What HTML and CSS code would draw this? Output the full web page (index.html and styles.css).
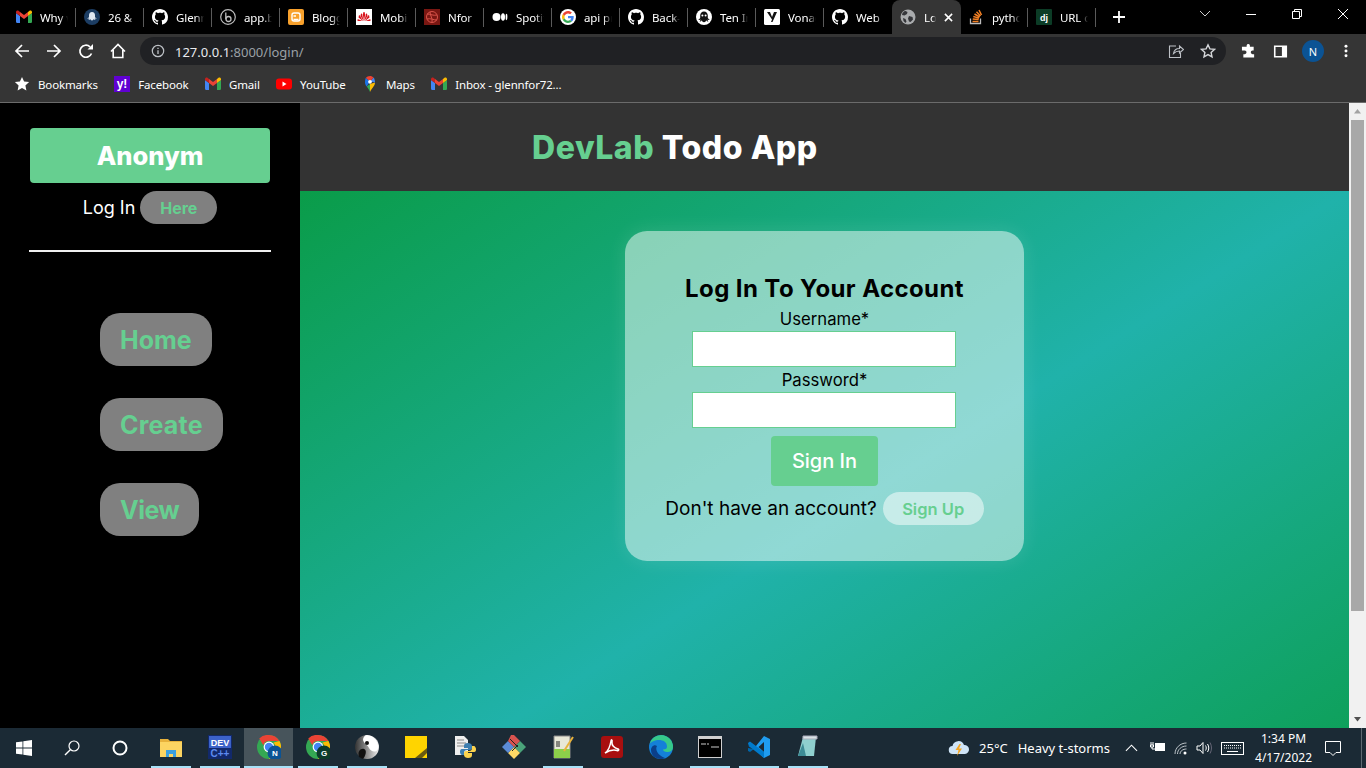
FILE: index.html
```html
<!DOCTYPE html>
<html lang="en">
<head>
<meta charset="utf-8">
<title>Log In</title>
<link rel="stylesheet" href="styles.css">
</head>
<body>
<svg class="defs" width="0" height="0" aria-hidden="true">
  <symbol id="gh" viewBox="0 0 16 16"><path fill="#fff" d="M8 0C3.58 0 0 3.58 0 8c0 3.54 2.29 6.53 5.47 7.59.4.07.55-.17.55-.38 0-.19-.01-.82-.01-1.49-2.01.37-2.53-.49-2.69-.94-.09-.23-.48-.94-.82-1.13-.28-.15-.68-.52-.01-.53.63-.01 1.08.58 1.23.82.72 1.21 1.87.87 2.33.66.07-.52.28-.87.51-1.07-1.78-.2-3.64-.89-3.64-3.95 0-.87.31-1.59.82-2.15-.08-.2-.36-1.02.08-2.12 0 0 .67-.21 2.2.82.64-.18 1.32-.27 2-.27.68 0 1.36.09 2 .27 1.53-1.04 2.2-.82 2.2-.82.44 1.1.16 1.92.08 2.12.51.56.82 1.27.82 2.15 0 3.07-1.87 3.75-3.65 3.95.29.25.54.73.54 1.48 0 1.07-.01 1.93-.01 2.2 0 .21.15.46.55.38A8.013 8.013 0 0016 8c0-4.42-3.58-8-8-8z"/></symbol>
  <symbol id="gmail" viewBox="0 0 16 16"><path fill="#4285f4" d="M1 14h3V7L0 4v8.500C0 13.300.6 14 1 14z"/><path fill="#34a853" d="M12 14h3c.6 0 1-.7 1-1.500V4l-4 3z"/><path fill="#fbbc04" d="M12 3v4l4-3V3c0-1.400-1.500-2-2.500-1.300z"/><path fill="#ea4335" d="M4 7V3l4 3 4-3v4L8 10z"/><path fill="#c5221f" d="M0 3v1l4 3V3L2.500 1.700C1.500 1 0 1.600 0 3z"/></symbol>
  <symbol id="chrome" viewBox="0 0 32 32"><circle cx="16" cy="16" r="16" fill="#34a853"/><path fill="#ea4335" d="M16 0a16 16 0 0 1 13.900 8H16a8 8 0 0 0-7.600 5.500L3 4.800A16 16 0 0 1 16 0z"/><path fill="#fbbc04" d="M29.900 8A16 16 0 0 1 16 32l6-10.500A8 8 0 0 0 22 10z"/><circle cx="16" cy="16" r="7.200" fill="#fff"/><circle cx="16" cy="16" r="5.600" fill="#4285f4"/></symbol>
  <symbol id="ghost" viewBox="0 0 16 16"><circle cx="8" cy="8" r="8" fill="#fff"/><path fill="#111" d="M8 2.500c-2.400 0-3.800 1.900-3.800 4V9c-.6.800-1.200 1.400-2 1.600.8.500 1.700.3 2.300-.2-.1 1-.5 1.700-1 2.200 1 .1 1.900-.4 2.300-1.400.2.900.7 1.700 2.200 2 1.500-.3 2-1.100 2.200-2 .4 1 1.300 1.500 2.300 1.400-.5-.5-.9-1.200-1-2.200.6.500 1.500.7 2.300.2-.8-.2-1.400-.8-2-1.600V6.500c0-2.100-1.400-4-3.800-4z"/><circle cx="6.400" cy="6.500" r="1" fill="#fff"/><circle cx="9.600" cy="6.500" r="1" fill="#fff"/></symbol>
</svg>

<div class="window">
  <header class="tabstrip">
    <div class="tab"><svg class="fav" viewBox="0 0 16 16"><use href="#gmail"/></svg><span class="tab-text">Why w</span></div>
    <div class="tab"><svg class="fav" viewBox="0 0 16 16"><circle cx="8" cy="8" r="8" fill="#1c3d63"/><path fill="#dfe8f2" d="M8 3c-2 0-3 1.500-3 3.200V8c-.5.700-1 1.200-1.800 1.400.7.400 1.400.3 2-.1 0 .8-.4 1.400-.8 1.800.8.100 1.500-.3 1.900-1.100.2.700.6 1.300 1.700 1.600 1.100-.3 1.500-.9 1.700-1.600.4.800 1.100 1.200 1.900 1.100-.4-.4-.8-1-.8-1.800.6.400 1.300.5 2 .1C12 9.200 11.500 8.700 11 8V6.200C11 4.500 10 3 8 3z"/></svg><span class="tab-text">26 &amp;</span></div>
    <div class="tab"><svg class="fav"><use href="#gh"/></svg><span class="tab-text">Glenn</span></div>
    <div class="tab"><svg class="fav" viewBox="0 0 16 16"><circle cx="8" cy="8" r="7.300" fill="none" stroke="#bdbdbd" stroke-width="1.200"/><path fill="none" stroke="#bdbdbd" stroke-width="1.300" d="M5.800 3.500v6.800"/><circle cx="8.500" cy="10" r="2.500" fill="none" stroke="#bdbdbd" stroke-width="1.300"/></svg><span class="tab-text">app.b</span></div>
    <div class="tab"><svg class="fav" viewBox="0 0 16 16"><rect width="16" height="16" rx="2" fill="#f8a12c"/><path fill="none" stroke="#fff" stroke-width="1.400" d="M5.500 10.500h5M5.500 7h2.500"/><rect x="4" y="4" width="8" height="8" rx="2" fill="none" stroke="#fff" stroke-width="1.400"/></svg><span class="tab-text">Blogg</span></div>
    <div class="tab"><svg class="fav" viewBox="0 0 16 16"><rect width="16" height="16" fill="#fff"/><path fill="#d8121b" d="M8 12 6.800 5.500 7.500 3 8 3zM8 12 9.200 5.500 8.500 3 8 3zM7.600 12 4.500 7l.5-2.500 1 .2zM8.400 12l3.100-5-.5-2.500-1 .2zM7 12 2.500 8.500 3 6l.8.500zM9 12l4.500-3.500L13 6l-.8.500zM6.500 12H1.500l.2-2zM9.500 12h5l-.2-2z"/></svg><span class="tab-text">Mobi</span></div>
    <div class="tab"><svg class="fav" viewBox="0 0 16 16"><rect width="16" height="16" fill="#7a1712"/><circle cx="8" cy="8" r="5.500" fill="none" stroke="#d9534a" stroke-width="1"/><path fill="none" stroke="#d9534a" d="M3 5c4 0 6 2 10 1M3 10c4-1 6 1 10 1M6 3c0 4 3 6 2 10"/></svg><span class="tab-text">Nfor</span></div>
    <div class="tab"><svg class="fav" viewBox="0 0 16 16"><circle cx="4.500" cy="8" r="4" fill="#fff"/><ellipse cx="11" cy="8" rx="2" ry="3.800" fill="#fff"/><ellipse cx="14.500" cy="8" rx=".9" ry="3.300" fill="#fff"/></svg><span class="tab-text">Spotif</span></div>
    <div class="tab"><svg class="fav" viewBox="0 0 16 16"><circle cx="8" cy="8" r="8" fill="#fff"/><path fill="#4285f4" d="M13.700 8.200c0-.4 0-.8-.1-1.200H8v2.300h3.200c-.1.700-.6 1.400-1.200 1.800l1.900 1.500c1.100-1 1.800-2.600 1.800-4.400z"/><path fill="#34a853" d="M8 14c1.600 0 3-.5 3.900-1.400L10 11.100c-.5.400-1.200.6-2 .6-1.500 0-2.800-1-3.300-2.400l-2 1.500C3.700 12.700 5.700 14 8 14z"/><path fill="#fbbc04" d="M4.700 9.300C4.400 8.500 4.400 7.500 4.700 6.700l-2-1.500c-.9 1.700-.9 3.900 0 5.600z"/><path fill="#ea4335" d="M8 4.400c.9 0 1.600.3 2.200.9l1.700-1.700C10.900 2.600 9.500 2 8 2 5.700 2 3.700 3.300 2.700 5.200l2 1.500C5.200 5.400 6.500 4.400 8 4.400z"/></svg><span class="tab-text">api pr</span></div>
    <div class="tab"><svg class="fav"><use href="#gh"/></svg><span class="tab-text">Back-</span></div>
    <div class="tab"><svg class="fav"><use href="#ghost"/></svg><span class="tab-text">Ten Ir</span></div>
    <div class="tab"><svg class="fav" viewBox="0 0 16 16"><rect width="16" height="16" rx="1.500" fill="#fff"/><path fill="#111" d="M3 3h3l2 5 2-5h3L8.500 13H7l1-2.500z"/></svg><span class="tab-text">Vonag</span></div>
    <div class="tab tab-before-active"><svg class="fav"><use href="#gh"/></svg><span class="tab-text">Web</span></div>
    <div class="tab tab-active"><svg class="fav" viewBox="0 0 16 16"><circle cx="8" cy="8" r="7.500" fill="#a9abad"/><path fill="#35363a" d="M5 1.800 7.500 3 7 5 4.500 6.500 2 6l.5-2zM9 7l3.500 1 .5 2.500L10.500 13 9 12.500 8 9.500zM3 9l2.500 1 1 2.500-1 1.500L3.500 12z"/></svg><span class="tab-text tab-text-short">Lo</span><svg class="tab-close" viewBox="0 0 10 10"><path fill="none" stroke="#fff" stroke-width="1.700" d="m1 1 8 8M9 1 1 9"/></svg></div>
    <div class="tab"><svg class="fav" viewBox="0 0 16 16"><path fill="none" stroke="#bcbbbb" stroke-width="1.300" d="M2.500 9.500v5h10v-5"/><path fill="none" stroke="#f48024" stroke-width="1.500" d="M4.500 12.500h6M4.700 10l6 .6M5.300 7.500l5.800 1.600M6.500 5l5.200 3M8.500 2.700l4 4.200M11 1l2.500 5"/></svg><span class="tab-text">pytho</span></div>
    <div class="tab"><svg class="fav" viewBox="0 0 16 16"><rect width="16" height="16" rx="1" fill="#0c3c26"/><text x="8" y="12" class="dj">dj</text></svg><span class="tab-text">URL c</span></div>
    <svg class="new-tab" viewBox="0 0 12 12"><path stroke="#fff" stroke-width="1.800" d="M6 0v12M0 6h12"/></svg>
    <div class="win-controls">
      <svg class="win-ic" viewBox="0 0 46 34"><path fill="none" stroke="#ccc" d="m18 11 5 5 5-5"/></svg>
      <svg class="win-ic" viewBox="0 0 46 34"><path stroke="#fff" d="M18 14.500h10"/></svg>
      <svg class="win-ic" viewBox="0 0 46 34"><path fill="none" stroke="#fff" d="M18.500 11.500h7v7h-7zM20.500 11.500v-2h7v7h-2"/></svg>
      <svg class="win-ic" viewBox="0 0 46 34"><path fill="none" stroke="#fff" d="m18 9 10 10M28 9 18 19"/></svg>
    </div>
  </header>

  <nav class="toolbar">
    <svg class="tool" viewBox="0 0 16 16"><path fill="none" stroke="#fff" stroke-width="1.700" d="M15 8H2M8 2 2 8l6 6"/></svg>
    <svg class="tool" viewBox="0 0 16 16"><path fill="none" stroke="#fff" stroke-width="1.700" d="M1 8h13M8 2l6 6-6 6"/></svg>
    <svg class="tool" viewBox="0 0 16 16"><path fill="none" stroke="#fff" stroke-width="1.700" d="M13.500 10.500A6 6 0 1 1 12 3.800"/><path fill="#fff" d="M15 1v5.500H9.500z"/></svg>
    <svg class="tool" viewBox="0 0 16 16"><path fill="none" stroke="#fff" stroke-width="1.600" d="M1 8.500 8 1.500l7 7M3.200 7v7.500h9.600V7"/></svg>
    <div class="omnibox">
      <svg class="info" viewBox="0 0 16 16"><circle cx="8" cy="8" r="6.500" fill="none" stroke="#bdc1c6" stroke-width="1.400"/><path stroke="#bdc1c6" stroke-width="1.500" d="M8 7v4.500M8 4.300v1.500"/></svg>
      <span class="url"><span class="url-host">127.0.0.1</span>:8000/login/</span>
      <svg class="omni-ic share" viewBox="0 0 16 16"><path fill="none" stroke="#bdc1c6" stroke-width="1.100" d="M8 3H1.500v11.500h11V10M5.500 10.500c.5-3 3-5 6-5V3L15.500 6.500l-4 3.500V8c-2.500 0-4.500 1-6 2.500z"/></svg>
      <svg class="omni-ic" viewBox="0 0 16 16"><path fill="none" stroke="#d5d7da" stroke-width="1.400" d="m8 1.800 1.900 4.100 4.500.5-3.300 3 .9 4.400L8 11.600l-4 2.200.9-4.400-3.300-3 4.500-.5z"/></svg>
    </div>
    <svg class="tool-r puzzle" viewBox="0 0 16 16"><path fill="#fff" d="M6 1.500a1.800 1.800 0 0 1 3.500 0V3h4v4h-1.200a1.900 1.900 0 0 0 0 3.800H14V14.500H2.500v-3.700H4a1.900 1.900 0 0 0 0-3.800H1V3h5z"/></svg>
    <svg class="tool-r panel" viewBox="0 0 16 16"><path fill="#fff" d="M1 1.500h14v13H1zM2.700 3.200v9.600H9.500V3.200z"/></svg>
    <span class="avatar">N</span>
    <svg class="tool-r dots" viewBox="0 0 16 16"><circle cx="8" cy="2.500" r="1.700" fill="#fff"/><circle cx="8" cy="8" r="1.700" fill="#fff"/><circle cx="8" cy="13.500" r="1.700" fill="#fff"/></svg>
  </nav>

  <div class="bookmarks">
    <span class="bm"><svg class="bm-ic" viewBox="0 0 16 16"><path fill="#fff" d="m8 1 2.100 4.600 5 .5-3.700 3.400 1 4.900L8 12l-4.400 2.400 1-4.900L.9 6.100l5-.5z"/></svg>Bookmarks</span>
    <span class="bm"><svg class="bm-ic" viewBox="0 0 16 16"><rect width="16" height="16" fill="#6001d2"/><text x="8" y="12" class="yh">y!</text></svg>Facebook</span>
    <span class="bm"><svg class="bm-ic"><use href="#gmail"/></svg>Gmail</span>
    <span class="bm"><svg class="bm-ic" viewBox="0 0 16 16"><rect y="2.500" width="16" height="11" rx="3" fill="#f00"/><path fill="#fff" d="m6.500 5.500 4 2.500-4 2.500z"/></svg>YouTube</span>
    <span class="bm"><svg class="bm-ic" viewBox="0 0 16 16"><path fill="#34a853" d="M8 16c-1-2.500-2-3.800-3.300-5.500L8 8z"/><path fill="#fbbc04" d="M8 16c1-2.500 2.500-4 3.500-5.500C12.500 9 13 7.800 13 6.500L8 8z"/><path fill="#4285f4" d="M11.500 1.500 8 5.500 13 6.500c0-2-.5-3.700-1.500-5z"/><path fill="#ea4335" d="M8 0C6.200 0 4.700.8 3.800 2L8 5.500l3.500-4C10.700.6 9.400 0 8 0z"/><path fill="#1a73e8" d="M3.800 2C3.300 2.900 3 5 3 6.500c0 1.500.8 3 1.700 4L8 5.500z"/><circle cx="8" cy="5.800" r="1.900" fill="#fff"/></svg>Maps</span>
    <span class="bm"><svg class="bm-ic"><use href="#gmail"/></svg>Inbox - glennfor72...</span>
  </div>

  <div class="viewport">
    <aside class="sidebar">
      <div class="user-box">Anonym</div>
      <div class="login-row">Log In <a class="here">Here</a></div>
      <hr class="rule">
      <ul class="nav">
        <li class="nav-item">Home</li>
        <li class="nav-item nav-create">Create</li>
        <li class="nav-item nav-view">View</li>
      </ul>
    </aside>
    <div class="page">
      <div class="page-head"><h1 class="brand"><span class="brand-green">DevLab</span> Todo App</h1></div>
      <main class="stage">
        <form class="card">
          <h2 class="card-title">Log In To Your Account</h2>
          <label class="field-label">Username*</label>
          <input class="field" type="text">
          <label class="field-label">Password*</label>
          <input class="field" type="password">
          <button class="signin" type="button">Sign In</button>
          <div class="signup-row">Don't have an account? <a class="signup">Sign Up</a></div>
        </form>
      </main>
    </div>
    <div class="scrollbar">
      <svg class="sb-arrow" viewBox="0 0 17 17"><path fill="#a3a3a3" d="m8.500 6 3.500 4.500H5z"/></svg>
      <div class="sb-track"><div class="sb-thumb"></div></div>
      <svg class="sb-arrow" viewBox="0 0 17 17"><path fill="#505050" d="M8.500 10.500 5 6h7z"/></svg>
    </div>
  </div>

  <footer class="taskbar">
    <div class="tb-left">
      <svg class="tb-sys" viewBox="0 0 16 16"><path fill="#fff" d="M0 2.300 6.500 1.400v6.200H0zM7.300 1.300 16 0v7.600H7.300zM0 8.400h6.500v6.200L0 13.700zM7.300 8.400H16V16l-8.700-1.300z"/></svg>
      <svg class="tb-sys" viewBox="0 0 16 16"><circle cx="10" cy="6" r="5" fill="none" stroke="#fff" stroke-width="1.200"/><path stroke="#fff" stroke-width="1.400" d="M6.300 9.700 1 15"/></svg>
      <svg class="tb-sys" viewBox="0 0 16 16"><circle cx="8" cy="8" r="6.500" fill="none" stroke="#fff" stroke-width="2"/></svg>
    </div>
    <div class="tb-apps">
      <span class="app open"><svg class="app-ic" viewBox="0 0 24 24"><path fill="#e8b23c" d="M1 4h8l2 2h12v4H1z"/><path fill="#fcd462" d="M1 7h22v15H1z"/><path fill="#3b9fe0" d="M7 15h10v7h-3v-3h-4v3H7z"/></svg></span>
      <span class="app open"><svg class="app-ic" viewBox="0 0 24 24"><rect width="24" height="24" fill="#12296b"/><rect x="1" y="1" width="22" height="12" fill="#3c62c8"/><text x="12" y="10.500" class="dev">DEV</text><text x="12" y="22" class="cpp">C++</text></svg></span>
      <span class="app open active"><svg class="app-ic" viewBox="0 0 24 24"><use href="#chrome"/><circle cx="18" cy="18" r="7.500" fill="#0b5394"/><text x="18" y="21" class="badge">N</text></svg></span>
      <span class="app open"><svg class="app-ic" viewBox="0 0 24 24"><use href="#chrome"/><circle cx="18" cy="18" r="7.500" fill="#0d3b2a"/><text x="18" y="21" class="badge">G</text></svg></span>
      <span class="app open"><svg class="app-ic" viewBox="0 0 24 24"><defs><linearGradient id="yy" x1="0" y1="0" x2="1" y2="0"><stop offset="0" stop-color="#333"/><stop offset="1" stop-color="#eee"/></linearGradient></defs><circle cx="12" cy="12" r="12" fill="url(#yy)"/><path fill="#fff" d="M12 0a12 12 0 0 1 11 14c-2 4-7 3-9-1-1-3-5-4-6-8 0-3 2-5 4-5z"/><path fill="#111" d="M4 22c-2-6 2-9 5-8 3 1 2 6-1 10z"/><circle cx="12" cy="8" r="2" fill="#111"/></svg></span>
      <span class="app"><svg class="app-ic" viewBox="0 0 24 24"><path fill="#ffd400" d="M1 1h22v22H1z"/><path fill="#6a5a10" d="M23 13v5l-5 5h-7z"/></svg></span>
      <span class="app"><svg class="app-ic" viewBox="0 0 24 24"><path fill="#eee" d="M2 1h9l4 4v15H2z"/><path stroke="#888" d="M4 5h7M4 8h9M4 11h9"/><path fill="#3d7eb0" d="M15 8c-3 0-4 1-4 3v2h4v1H9c-2 0-2 2-2 3s1 3 2 3h2v-2c0-2 1-3 3-3h3c1 0 2-1 2-2v-2c0-2-2-3-4-3z"/><path fill="#fcd34d" d="M15 23c3 0 4-1 4-3v-2h-4v-1h6c2 0 2-2 2-3s-1-3-2-3h-2v2c0 2-1 3-3 3h-3c-1 0-2 1-2 2v2c0 2 2 3 4 3z"/></svg></span>
      <span class="app"><svg class="app-ic" viewBox="0 0 24 24"><path fill="#4aa37a" d="M12 12 18 6l6 6-6 6z"/><path fill="#ffd866" d="m12 12 6 6-6 6-6-6z"/><path fill="#5b8bd6" d="m12 12-6 6-6-6 6-6z"/><path fill="#d9534f" d="m12 12-6-6 3-6h3l6 6z"/><path stroke="#222" d="M8 4l8 8M10 16l6-6"/></svg></span>
      <span class="app open"><svg class="app-ic" viewBox="0 0 24 24"><path fill="#e8e8d8" stroke="#888" d="M3 1h16v22H3z"/><path fill="#8ccf4a" d="M3 14h16v9H3z"/><path stroke="#222" d="M6 6v6M8 6v6"/><path stroke="#e8b23c" stroke-width="2" d="M13 16 22 2"/></svg></span>
      <span class="app"><svg class="app-ic" viewBox="0 0 24 24"><rect x="1" y="1" width="22" height="22" rx="3" fill="#a80f0f"/><path fill="none" stroke="#fff" stroke-width="1.500" d="M5 18c3-2 5-6 6-12 .3-2 1.500-1 1 1-.5 3 2 6 6 7 1.500.500.500 2-1 1.500-4-1-8 0-12 2.500z"/></svg></span>
      <span class="app"><svg class="app-ic" viewBox="0 0 24 24"><circle cx="12" cy="12" r="12" fill="#1480d8"/><path fill="#36c98a" d="M12 0a12 12 0 0 1 12 12c0 4-3 5-6 5-2 0-4-1-4-2.500 3 0 4-1 4-3C18 7 14 5 10 5 6 5 2 7 .500 9A12 12 0 0 1 12 0z"/><path fill="#0b3f8a" d="M8 11c-2 3 0 9 8 12-1 .5-2.500 1-4 1-6 0-10-4-10-9 0-3 3-6 6-4z"/></svg></span>
      <span class="app open"><svg class="app-ic" viewBox="0 0 24 24"><rect y="1" width="24" height="22" fill="#d0d0d0"/><rect x="1" y="4" width="22" height="18" fill="#000"/><path stroke="#ccc" d="M3 9h5M9 9h2M13 12h8"/></svg></span>
      <span class="app open"><svg class="app-ic" viewBox="0 0 24 24"><path fill="#0065a9" d="M1 8.500 3 7l5 4-1 2-5-1z M7 14 3 17 1 16v-3z"/><path fill="#1f9cf0" d="M17 1l6 3v16l-6 3L7 13.500zM17 7l-5.500 5 5.500 5z"/><path fill="#007acc" d="M1 8 3 6.500 17 17v6L3 12z"/></svg></span>
      <span class="app open"><svg class="app-ic" viewBox="0 0 24 24"><path fill="#8fd0cf" d="M7 2h13l-2 19H2z"/><path fill="#3d8c96" d="M2 21 7 8l3 13z"/><path fill="#d8e3e6" stroke="#aab" d="M7 1h14v3H7z"/></svg></span>
    </div>
    <div class="tray">
      <svg class="weather" viewBox="0 0 22 18"><path fill="#cfe4f7" d="M5 15a4 4 0 0 1-.5-8A6 6 0 0 1 16 6a4.500 4.500 0 0 1 1 9z"/><path fill="#f5a623" d="M11.500 5 7.500 11h3l-1.500 6 5-7.500h-3l2-4.500z"/></svg>
      <span class="temp">25°C</span>
      <span class="cond">Heavy t-storms</span>
      <svg class="chev" viewBox="0 0 14 8"><path fill="none" stroke="#fff" stroke-width="1.200" d="m1 7 6-6 6 6"/></svg>
      <svg class="tray-ic batt" viewBox="0 0 16 10"><path fill="#fff" d="M5 1h10v8H5z"/><path fill="none" stroke="#fff" d="M.5 3v2h3V3zM2 5v2h3M1 3V0M3 3V0"/></svg>
      <svg class="tray-ic wifi" viewBox="0 0 14 14"><path fill="none" stroke="#bcc3c8" d="M1 13C1 7 6 2 12.500 2M3.500 13c0-4.500 4-8 9-8M6 13c0-3 3-5 6.500-5"/><circle cx="11" cy="12" r="1.500" fill="#fff"/></svg>
      <svg class="tray-ic vol" viewBox="0 0 16 14"><path fill="none" stroke="#fff" d="M1 5h3l3-3.500v11L4 9H1zM9.500 4.500c1 1.500 1 3.500 0 5M11.500 3c1.700 2.500 1.700 5.500 0 8"/><path fill="none" stroke="#667" d="M14 1.500c2 3.500 2 7.500 0 11"/></svg>
      <svg class="kbd" viewBox="0 0 23 13"><rect x=".5" y=".5" width="22" height="12" fill="none" stroke="#fff"/><path stroke="#fff" stroke-dasharray="1 1" d="M3 3.500h17M3 6h17"/><path stroke="#fff" d="M6 9.500h11"/></svg>
      <span class="clock"><span>1:34 PM</span><span>4/17/2022</span></span>
      <svg class="notif" viewBox="0 0 16 16"><path fill="none" stroke="#fff" d="M.5 1.500h15v11H11l-3 3-3-3H.5z"/></svg>
      <span class="show-desktop"></span>
    </div>
  </footer>
</div>
</body>
</html>
```

FILE: styles.css
```css
* { box-sizing: border-box; }
html, body { margin: 0; height: 100%; overflow: hidden; }
body { font-family: "Noto Sans", "Open Sans", sans-serif; background: #000; }
.defs { position: absolute; }
.window { display: flex; flex-direction: column; width: 1366px; height: 768px; }

/* tab strip */
.tabstrip { display: flex; align-items: stretch; height: 34px; background: #000; padding-left: 8px; flex: none; }
.tab { position: relative; display: flex; align-items: center; width: 68px; padding-left: 8px; color: #fff; font-size: 11.5px; letter-spacing: -.1px; }
.tab::after { content: ""; position: absolute; right: 0; top: 8px; height: 19px; width: 1px; background: #5a5a5a; }
.tab-before-active::after, .tab-active::after { display: none; }
.fav { width: 16px; height: 16px; flex: none; }
.tab-text { width: 28px; margin-left: 8px; overflow: hidden; white-space: nowrap; -webkit-mask-image: linear-gradient(to right, #000 70%, transparent); mask-image: linear-gradient(to right, #000 70%, transparent); }
.tab-active { background: #353535; border-radius: 8px 8px 0 0; width: 69px; margin-right: -1px; }
.tab-text-short { width: 12px; }
.tab-close { width: 9px; height: 9px; margin-left: 8px; flex: none; }
.new-tab { width: 12px; height: 12px; margin: 11px 0 0 17px; flex: none; }
.win-controls { margin-left: auto; display: flex; }
.win-ic { width: 46px; height: 34px; display: block; }
.dj { font: 700 9px "Liberation Sans", sans-serif; fill: #fff; text-anchor: middle; }

/* toolbar */
.toolbar { display: flex; align-items: center; height: 34px; background: #353535; flex: none; padding-left: 14px; }
.tool { width: 16px; height: 16px; margin-right: 16px; flex: none; }
.omnibox { display: flex; align-items: center; width: 1086px; height: 28px; margin-left: -2px; border-radius: 14px; background: #202124; padding-left: 11px; }
.info { width: 14px; height: 14px; }
.url { margin: 1px 0 0 10px; font-size: 13px; color: #9aa0a6; }
.url-host { color: #e8eaed; }
.omni-ic { width: 16px; height: 16px; margin-right: 16px; flex: none; }
.omni-ic:last-child { margin-right: 10px; }
.share { margin-left: auto; }
.tool-r { flex: none; }
.puzzle { width: 15px; height: 15px; margin-left: 15px; }
.panel { width: 15px; height: 15px; margin-left: 17px; }
.avatar { width: 22px; height: 22px; margin-left: 14px; border-radius: 50%; background: #0b5394; color: #fff; font-size: 11px; display: flex; align-items: center; justify-content: center; flex: none; }
.dots { width: 14px; height: 14px; margin-left: 15px; }

/* bookmarks */
.bookmarks { display: flex; align-items: center; height: 35px; background: #353535; border-bottom: 1px solid #6b6b6b; padding: 0 0 2px 14px; color: #fff; font-size: 11.5px; letter-spacing: -.15px; flex: none; }
.bm { display: flex; align-items: center; gap: 8px; margin-right: 16.400px; white-space: nowrap; }
.bm-ic { width: 16px; height: 16px; flex: none; }
.yh { font: 700 12px "Liberation Sans", sans-serif; fill: #fff; text-anchor: middle; letter-spacing: 0; }

/* viewport */
.viewport { display: flex; flex: 1; min-height: 0; overflow: hidden; font-family: Inter, "Noto Sans", sans-serif; }
.sidebar { width: 300px; flex: none; background: #000; padding: 25px 29px 0; color: #fff; }
.user-box { height: 55px; margin: 0 1px; background: #66cf90; border-radius: 4px; font-size: 25.500px; font-weight: 800; display: flex; align-items: center; justify-content: center; }
.login-row { display: flex; align-items: center; justify-content: center; gap: 5px; margin-top: 8px; height: 33px; font-size: 18px; }
.here { display: flex; align-items: center; justify-content: center; width: 77px; height: 33px; border-radius: 17px; background: #808080; color: #66cf90; font-size: 16px; font-weight: 700; }
.rule { margin: 26px 0 0; border: 0; height: 2px; background: #f0f0f0; }
.nav { list-style: none; margin: 61px 0 0; padding: 0 0 0 71px; display: flex; flex-direction: column; align-items: flex-start; gap: 32px; }
.nav-item { height: 53px; padding: 0 20px; border-radius: 20px; background: #808080; color: #66cf90; font-size: 25px; font-weight: 700; display: flex; align-items: center; }
.nav-create { letter-spacing: .2px; }
.nav-view { letter-spacing: -.5px; }

.page { flex: 1; display: flex; flex-direction: column; min-width: 0; }
.page-head { height: 88px; background: #333; display: flex; align-items: center; padding-left: 232px; flex: none; }
.brand { margin: 0; color: #fff; font-size: 32px; font-weight: 800; letter-spacing: .55px; }
.brand-green { color: #66cf90; }
.stage { flex: none; height: 664px; display: flex; justify-content: center; align-items: flex-start; padding-top: 40px; background: linear-gradient(to bottom right, #0a9c49, #20b2aa, #0a9c49); }
.card { width: 399px; height: 330px; padding-top: 40px; border-radius: 22px; background: rgba(255,255,255,.5); box-shadow: 0 0 20px rgba(255,255,255,.12); display: flex; flex-direction: column; align-items: center; color: #000; }
.card-title { margin: 0; height: 35px; line-height: 35px; font-size: 24px; font-weight: 700; letter-spacing: .4px; white-space: nowrap; }
.field-label { height: 25px; line-height: 27px; font-size: 16.700px; }
.field { width: 264px; height: 36px; margin-right: 2px; border: 1px solid #66cf90; background: #fff; padding: 0; display: block; }
.signin { margin-top: 8px; width: 107px; height: 50px; border: 0; border-radius: 4px; background: #66cf90; color: #fff; font: 500 20px Inter, sans-serif; }
.signup-row { margin-top: 6px; display: flex; align-items: center; gap: 6px; height: 33px; font-size: 19px; white-space: nowrap; }
.signup { display: flex; align-items: center; justify-content: center; width: 101px; height: 33px; border-radius: 17px; background: rgba(255,255,255,.5); color: #66cf90; font-size: 16.500px; font-weight: 600; }

.scrollbar { width: 17px; flex: none; background: #f1f1f1; display: flex; flex-direction: column; }
.sb-arrow { width: 17px; height: 17px; flex: none; display: block; }
.sb-track { flex: 1; padding: 0 2px; }
.sb-thumb { height: 491px; background: #a8a8a8; }

/* taskbar */
.taskbar { display: flex; align-items: center; height: 40px; background: #1b2a35; color: #fff; flex: none; }
.tb-left { display: flex; width: 145px; padding-left: 16px; gap: 32px; flex: none; }
.tb-sys { width: 16px; height: 16px; }
.tb-apps { display: flex; align-self: stretch; padding-left: 1px; }
.app { position: relative; width: 49px; display: flex; align-items: center; justify-content: center; }
.app-ic { width: 24px; height: 24px; margin-top: -2px; }
.open::after { content: ""; position: absolute; left: 5px; right: 4px; bottom: 0; height: 2px; background: #a8e1f7; }
.active { background: #47545b; }
.active::after { left: 0; right: 0; }
.dev { font: 700 9px "Liberation Sans", sans-serif; fill: #fff; text-anchor: middle; }
.cpp { font: 700 10px "Liberation Sans", sans-serif; fill: #5d8bf0; text-anchor: middle; }
.badge { font: 700 8px "Liberation Sans", sans-serif; fill: #fff; text-anchor: middle; }
.tray { display: flex; align-items: center; margin-left: auto; font-size: 13px; height: 100%; }
.weather { width: 22px; height: 18px; }
.temp { margin-left: 9px; }
.cond { margin-left: 10px; margin-right: 15px; }
.chev { width: 13px; height: 8px; }
.tray-ic { margin-left: 10px; }
.batt { width: 16px; height: 10px; margin-top: -3px; margin-left: 12px; }
.wifi { width: 14px; height: 14px; margin-left: 8px; }
.vol { width: 16px; height: 14px; margin-left: 8px; }
.kbd { width: 23px; height: 13px; margin-left: 9px; }
.clock { display: flex; flex-direction: column; align-items: center; width: 55px; margin-left: 12px; font-size: 12px; line-height: 19px; }
.notif { width: 16px; height: 16px; margin-left: 14px; }
.show-desktop { width: 1px; height: 100%; margin: 0 4px 0 20px; background: #5d6a72; }
```
